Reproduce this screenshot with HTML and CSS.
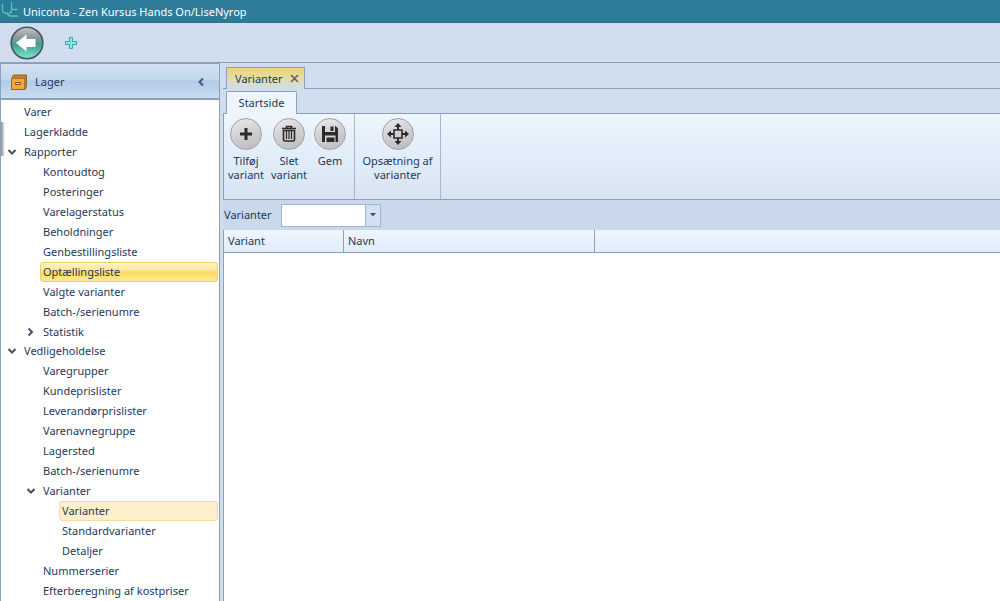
FILE: index.html
```html
<!DOCTYPE html>
<html lang="da">
<head>
<meta charset="utf-8">
<title>Uniconta</title>
<link rel="stylesheet" href="styles.css">
</head>
<body>
<div class="app">
  <header class="titlebar">
    <svg class="logo" width="20" height="20" viewBox="0 0 20 20" fill="none" stroke="#5cc4a8" stroke-width="1.300"><path d="M2.500 4v6q0 3 4 3.500l3 2.500M11.500 2v9.500M11.500 9.500h6M7 12.500l3 3.500h8M9 12.500h3"/></svg>
    <h1 class="title">Uniconta - Zen Kursus Hands On/LiseNyrop</h1>
  </header>
  <div class="quickbar">
    <button class="back" type="button" aria-label="Tilbage">
      <svg width="34" height="34" viewBox="0 0 34 34"><defs><linearGradient id="bk" x1="0" y1="0" x2="0" y2="1"><stop offset="0" stop-color="#c4c4c6"/><stop offset=".3" stop-color="#8f9c9c"/><stop offset=".55" stop-color="#3f9f92"/><stop offset="1" stop-color="#7fe8d2"/></linearGradient></defs><circle cx="17" cy="17" r="15.800" fill="url(#bk)" stroke="#4c5459" stroke-width="1.600"/><path d="M6 17l10.500-8.500v4.500h9v8h-9v4.500z" fill="#fff"/></svg>
    </button>
    <button class="add" type="button" aria-label="Tilføj">
      <svg width="12" height="12" viewBox="0 0 12 12"><path d="M4.500.5h3v4h4v3h-4v4h-3v-4h-4v-3h4z" fill="#7beee4" stroke="#35a5a5"/></svg>
    </button>
  </div>
  <div class="body">
    <nav class="sidebar">
      <div class="side-head">
        <svg width="16" height="16" viewBox="0 0 16 16"><path d="M.5 4.500L2.500 1h13v11.500l-1.500 3H.5z" fill="#c98120" stroke="#95652a"/><path d="M1 5h12.500v10H1z" fill="#efa842"/><path d="M1 4.500h12.500V15M13.500 4.500l2-3" fill="none" stroke="#a5712c"/><path d="M4.500 8.500h5v2h-5z" fill="#fbd590" stroke="#80551c"/></svg>
        <h2 class="side-title">Lager</h2>
        <button class="collapse" type="button" aria-label="Skjul"><svg width="8" height="10" viewBox="0 0 8 10"><path d="M6 1.500L2.500 5 6 8.500" fill="none" stroke="#45577a" stroke-width="2"/></svg></button>
      </div>
      <ul class="tree">
        <li><a class="node" href="#">Varer</a></li>
        <li><a class="node" href="#">Lagerkladde</a></li>
        <li><a class="node open" href="#"><svg class="arrow" width="8" height="8" viewBox="0 0 8 8"><path d="M.5 2L4 5.500 7.500 2"/></svg>Rapporter</a>
          <ul>
            <li><a class="node" href="#">Kontoudtog</a></li>
            <li><a class="node" href="#">Posteringer</a></li>
            <li><a class="node" href="#">Varelagerstatus</a></li>
            <li><a class="node" href="#">Beholdninger</a></li>
            <li><a class="node" href="#">Genbestillingsliste</a></li>
            <li><a class="node hot" href="#">Optællingsliste</a></li>
            <li><a class="node" href="#">Valgte varianter</a></li>
            <li><a class="node" href="#">Batch-/serienumre</a></li>
            <li><a class="node closed" href="#"><svg class="arrow" width="8" height="8" viewBox="0 0 8 8"><path d="M1.500.5L5 4 1.500 7.500"/></svg>Statistik</a></li>
          </ul>
        </li>
        <li><a class="node open" href="#"><svg class="arrow" width="8" height="8" viewBox="0 0 8 8"><path d="M.5 2L4 5.500 7.500 2"/></svg>Vedligeholdelse</a>
          <ul>
            <li><a class="node" href="#">Varegrupper</a></li>
            <li><a class="node" href="#">Kundeprislister</a></li>
            <li><a class="node" href="#">Leverandørprislister</a></li>
            <li><a class="node" href="#">Varenavnegruppe</a></li>
            <li><a class="node" href="#">Lagersted</a></li>
            <li><a class="node" href="#">Batch-/serienumre</a></li>
            <li><a class="node open" href="#"><svg class="arrow" width="8" height="8" viewBox="0 0 8 8"><path d="M.5 2L4 5.500 7.500 2"/></svg>Varianter</a>
              <ul>
                <li><a class="node current" href="#">Varianter</a></li>
                <li><a class="node" href="#">Standardvarianter</a></li>
                <li><a class="node" href="#">Detaljer</a></li>
              </ul>
            </li>
            <li><a class="node" href="#">Nummerserier</a></li>
            <li><a class="node" href="#">Efterberegning af kostpriser</a></li>
          </ul>
        </li>
      </ul>
    </nav>
    <main class="main">
      <div class="doc-tabs">
        <div class="doc-tab"><span>Varianter</span><button class="close" type="button" aria-label="Luk"><svg width="9" height="9" viewBox="0 0 9 9"><path d="M1 1l7 7M8 1L1 8" stroke="#65645c" stroke-width="1.600"/></svg></button></div>
      </div>
      <div class="page-tabs"><button class="page-tab" type="button">Startside</button></div>
      <div class="ribbon">
        <div class="group">
          <button class="tool" type="button"><span class="disc"><svg width="32" height="32" viewBox="0 0 32 32"><path d="M16 10v12M10 16h12" stroke="#2b2b2b" stroke-width="3"/></svg></span>Tilføj<br>variant</button>
          <button class="tool" type="button"><span class="disc"><svg width="32" height="32" viewBox="0 0 32 32" fill="none" stroke="#2b2b2b"><path d="M9 10.500h14M13.500 10V8.500h5V10" stroke-width="1.600"/><path d="M10.500 12.500h11v9q0 1.500-1.500 1.500h-8q-1.500 0-1.500-1.500z" stroke-width="1.600"/><path d="M13.500 13v8M16 13v8M18.500 13v8" stroke-width="1.200"/></svg></span>Slet<br>variant</button>
          <button class="tool" type="button"><span class="disc"><svg width="32" height="32" viewBox="0 0 32 32"><path d="M8 8h13.500l2.500 2.500V24H8z" fill="#2b2b2b"/><path d="M11 8h10v6H11zM11 17.500h10.500V24H11z" fill="#d6d6d6"/><path d="M16.500 8.500h3v4.500h-3zM12.500 19.500h8V24h-8z" fill="#2b2b2b"/></svg></span>Gem</button>
        </div>
        <div class="group setup">
          <button class="tool" type="button"><span class="disc"><svg width="32" height="32" viewBox="0 0 32 32" fill="#2b2b2b"><path d="M12 12h8v8h-8z" fill="none" stroke="#2b2b2b" stroke-width="1.600"/><path d="M16 5l3.500 4h-2.500v3h-2V9h-2.500zM16 27l3.500-4h-2.500v-3h-2v3h-2.500zM5 16l4-3.500V15h3v2H9v2.500zM27 16l-4-3.500V15h-3v2h3v2.500z"/></svg></span>Opsætning af<br>varianter</button>
        </div>
      </div>
      <div class="filter">
        <label for="variant">Varianter</label>
        <div class="combo"><input id="variant" type="text"><button class="drop" type="button" aria-label="Vis liste"><svg width="6" height="4" viewBox="0 0 6 4"><path d="M0 0h6L3 3.500z" fill="#45516b"/></svg></button></div>
      </div>
      <div class="grid">
        <table>
          <colgroup><col class="col-variant"><col class="col-name"><col></colgroup>
          <thead><tr><th>Variant</th><th>Navn</th><th></th></tr></thead>
        </table>
      </div>
    </main>
  </div>
</div>
</body>
</html>
```
FILE: styles.css
```css
* { box-sizing: border-box; }
body { margin: 0; font: 11px/14px "Noto Sans", "Open Sans", sans-serif; color: #1e395b; }
button { padding: 0; border: 0; background: none; font: inherit; color: inherit; }
h1, h2 { margin: 0; font: inherit; }
svg { display: block; }
.app { display: flex; flex-direction: column; height: 100vh; background: #cfddee; overflow: hidden; }
.titlebar { display: flex; gap: 3px; height: 23px; background: linear-gradient(#2c7c9a 19px, #32718f); color: #fff; }
.title { line-height: 24px; }
.quickbar { display: flex; align-items: center; gap: 21px; height: 40px; padding-left: 10px; border-bottom: 1px solid #8ba0bc; }
.body { display: flex; flex: 1; min-height: 0; }
.sidebar { flex: 0 0 220px; border: 1px solid #8ba0bc; border-bottom: 0; background: #fff; overflow: hidden; }
.side-head { display: flex; align-items: center; gap: 8px; height: 36px; padding: 1px 14px 0 10px; border-bottom: 2px solid #8ba0bc; background: linear-gradient(#d2e0f1, #c4d7ec 45%, #b2cbe6 50%, #c9dcf0); }
.side-title { flex: 1; }
.tree, .tree ul { margin: 0; padding: 0; list-style: none; }
.tree { padding: 2px 1px 0 20px; background: linear-gradient(90deg, #8a8a92, #fff) 0 22px / 4px 34px no-repeat; }
.tree ul { padding-left: 19px; }
.node { display: flex; align-items: center; height: 20px; padding-left: 2px; border: 1px solid transparent; border-radius: 3px; color: inherit; text-decoration: none; }
.open, .closed { gap: 8px; margin-left: -16px; }
.closed { height: 19px; }
.arrow { fill: none; stroke: #45516b; stroke-width: 2; }
.hot { border-color: #e9cf68; background: linear-gradient(#fdf3c4, #fce9a0 35%, #fbdb62 55%, #fdeb9a); }
.current { border-color: #f2dca4; background: #fdf0cb; }
.main { display: flex; flex-direction: column; flex: 1; min-width: 0; margin-left: 3px; }
.doc-tabs { display: flex; align-items: flex-end; height: 26px; padding-left: 3px; border-bottom: 1px solid #8ba0bc; }
.doc-tab { display: flex; align-items: center; justify-content: space-between; width: 79px; height: 22px; padding: 0 5px 0 8px; margin-bottom: -1px; border: 1px solid #8ba0bc; border-bottom: 0; background: linear-gradient(#e9d676, #e5dda6 50%, #cfddee); }
.page-tabs { display: flex; align-items: flex-end; height: 25px; padding-left: 3px; border-bottom: 1px solid #8ba0bc; }
.page-tab { min-width: 71px; height: 23px; margin-bottom: -1px; border: 1px solid #8ba0bc; border-bottom: 0; border-radius: 2px 2px 0 0; background: #eff5fd; }
.ribbon { display: flex; height: 86px; border-left: 1px solid #8ba0bc; border-bottom: 1px solid #8ba0bc; background: linear-gradient(#eef5fd, #e1edf9 50%, #d8e4f3); }
.group { display: flex; align-items: flex-start; justify-content: space-between; min-width: 131px; padding: 4px 8px 0 4px; border-right: 1px solid #a5b7d0; }
.setup { justify-content: center; min-width: 86px; padding: 4px 4px 0; }
.tool { text-align: center; }
.disc { display: block; width: 32px; height: 32px; margin: 0 auto 4px; border: 1px solid #a2a2a6; border-radius: 50%; background: linear-gradient(160deg, #ececee, #cfcfd1 50%, #bcbcbf); }
.disc svg { margin: -1px; }
.filter { display: flex; align-items: center; height: 30px; padding-left: 1px; background: #c9d8eb; }
.filter label { width: 57px; }
.combo { display: flex; width: 100px; height: 23px; border: 1px solid #9db4d4; background: #fff; }
.combo input { flex: 1; min-width: 0; padding: 0 3px; border: 0; background: #fff; font: inherit; }
.drop { display: flex; align-items: center; justify-content: center; width: 15px; border-left: 1px solid #9db4d4; background: #d3e0f1; }
.grid { flex: 1; border-left: 1px solid #8ba0bc; background: #fff; }
table { width: 100%; table-layout: fixed; border-collapse: separate; border-spacing: 0; }
.col-variant { width: 120px; }
.col-name { width: 251px; }
th { height: 23px; padding: 0 4px; border-bottom: 1px solid #8ba0bc; border-right: 1px solid #8ba0bc; background: linear-gradient(#eff5fd, #e1edfa); font-weight: normal; text-align: left; }
th:last-child { border-right: 0; }
```
